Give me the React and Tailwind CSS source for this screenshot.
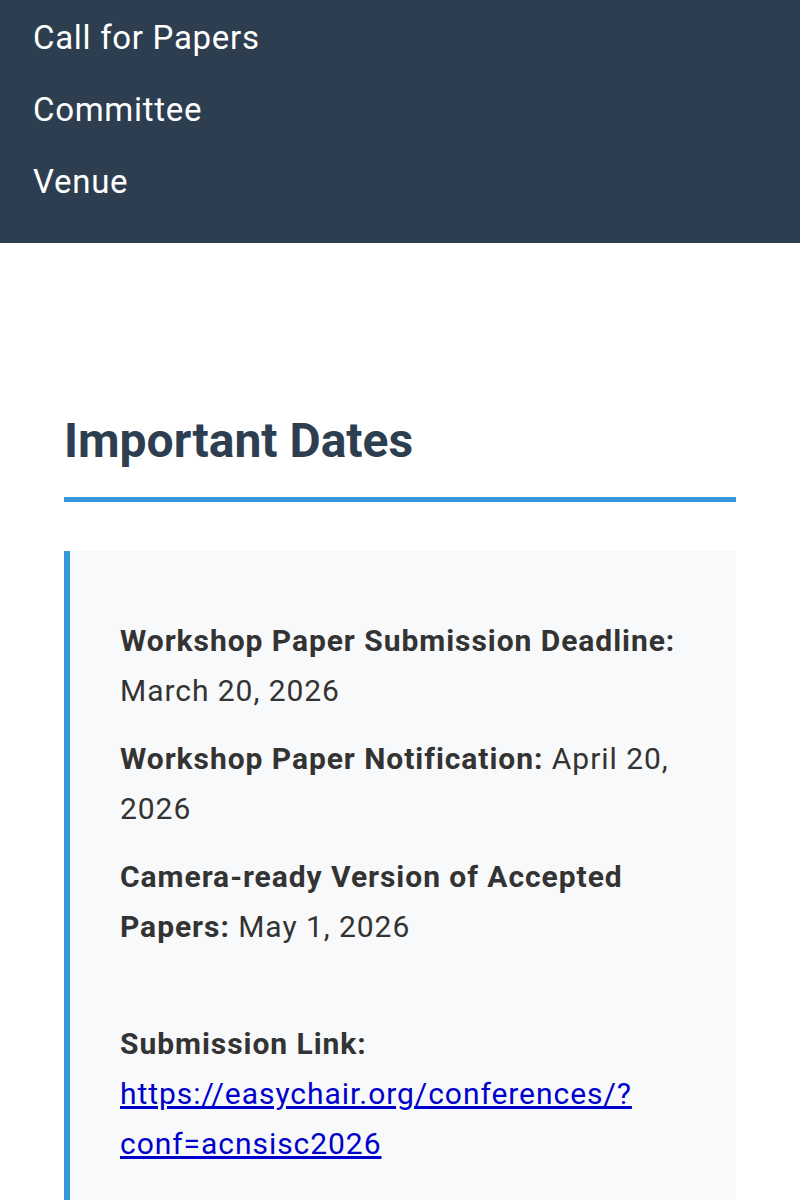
export default function App() {
  return (
    <div className="min-h-[1200px] bg-white" style={{ fontFamily: "Roboto, 'Noto Sans', sans-serif" }}>
      <nav className="bg-[#2c3e50] h-[243px] pt-[2px]">
        <ul className="flex flex-col">
          <li className="h-[72px] flex items-center px-[33px] text-[33px] tracking-[0.7px] text-white">Call for Papers</li>
          <li className="h-[72px] flex items-center px-[33px] text-[33px] tracking-[0.7px] text-white">Committee</li>
          <li className="h-[72px] flex items-center px-[33px] text-[33px] tracking-[0.7px] text-white">Venue</li>
        </ul>
      </nav>

      <main className="px-[64px] pt-[168px]">
        <h2 className="text-[48px] leading-[60px] font-bold text-[#2c3e50] pb-[26px] border-b-[5px] border-[#3498db]">
          Important Dates
        </h2>

        <div className="mt-[49px] bg-[#f8f9fa] border-l-[6px] border-[#3498db] pl-[50px] pr-[50px] pt-[65px] pb-[40px] text-[30px] leading-[50px] tracking-[0.95px] text-[#333]">
          <p>
            <strong className="font-bold">Workshop Paper Submission Deadline:</strong> March 20, 2026
          </p>
          <p className="mt-[18px]">
            <strong className="font-bold">Workshop Paper Notification:</strong> April 20, 2026
          </p>
          <p className="mt-[18px]">
            <strong className="font-bold">Camera-ready Version of Accepted Papers:</strong> May 1, 2026
          </p>
          <p className="mt-[67px]">
            <strong className="font-bold">Submission Link:</strong>{" "}
            <a href="#" className="text-[#0000cc] underline">
              https://easychair.org/conferences/?conf=acnsisc2026
            </a>
          </p>
        </div>
      </main>
    </div>
  );
}
